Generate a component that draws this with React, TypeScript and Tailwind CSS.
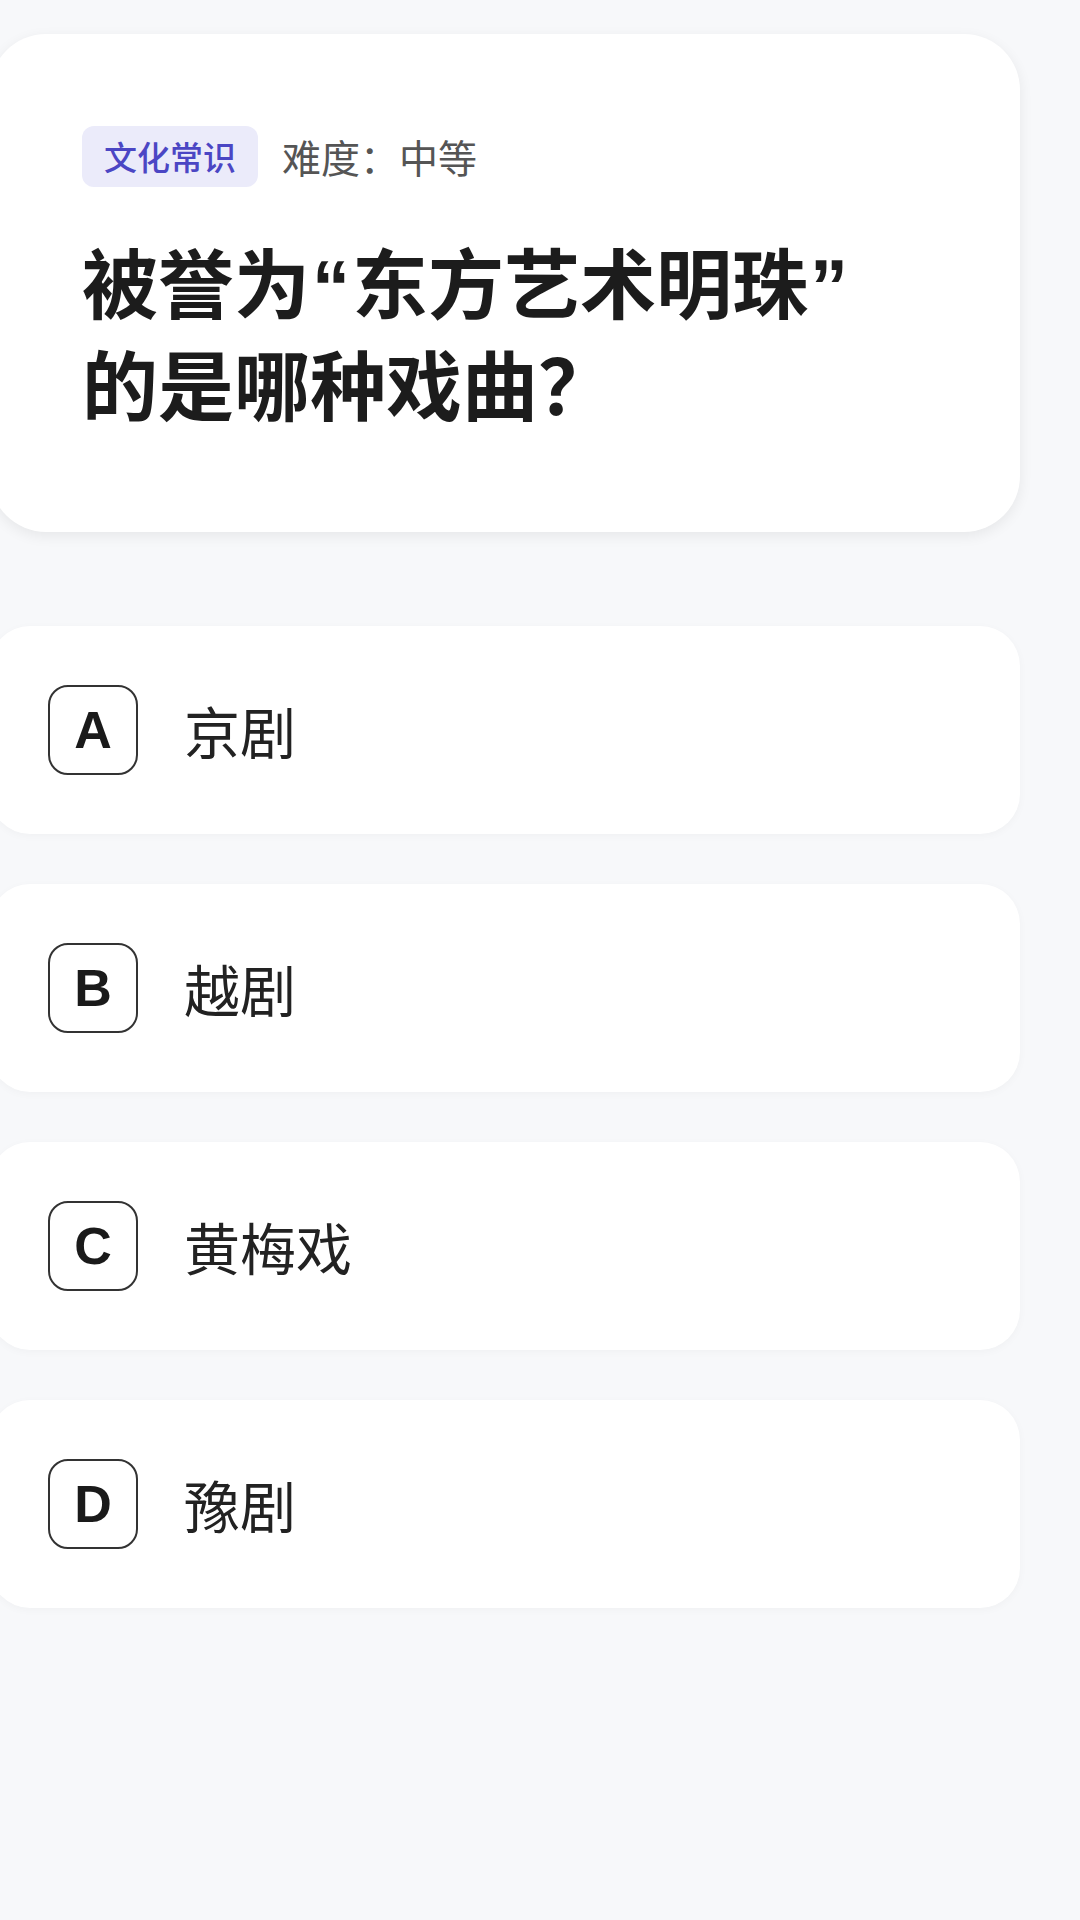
const OPTIONS = [
  { key: 'A', text: '京剧' },
  { key: 'B', text: '越剧' },
  { key: 'C', text: '黄梅戏' },
  { key: 'D', text: '豫剧' },
]

const CJK = "font-['Noto_Sans_CJK_SC','Noto_Sans',sans-serif]"
const LATIN = "font-['Liberation_Sans','Roboto',sans-serif]"

export default function App() {
  return (
    <div className={`min-h-[1920px] w-[1080px] overflow-hidden bg-[#f7f8fa] ${CJK}`}>
      <div className="-ml-[10px] flex flex-col pr-[60px] pt-[34px]">
        {/* Question card */}
        <div className="rounded-[56px] bg-white pb-[99px] pl-[92px] pr-[40px] pt-[92px] shadow-[0_4px_14px_rgba(0,0,0,0.07)]">
          <div className="flex items-center gap-[24px]">
            <span className="flex h-[61px] items-center rounded-[12px] bg-[#ebebfa] px-[22px] text-[33px] font-medium text-[#4b46c4]">
              文化常识
            </span>
            <span className="text-[39px] text-[#555555]">难度：中等</span>
          </div>
          <h1 className="mt-[42px] h-[204px] text-[76px] font-bold leading-[102px] text-[#1c1c1c]">
            被誉为<span className={`${LATIN} mx-[2px] leading-[0]`}>“</span>东方艺术明珠<span className={`${LATIN} mx-[2px] leading-[0]`}>”</span>
            <br />
            的是哪种戏曲？
          </h1>
        </div>

        {/* Options */}
        <div className="mt-[94px] flex flex-col gap-[50px]">
          {OPTIONS.map(o => (
            <div
              key={o.key}
              className="flex h-[208px] items-center gap-[46px] rounded-[40px] bg-white pl-[58px] shadow-[0_2px_8px_rgba(0,0,0,0.03)]"
            >
              <span className={`flex h-[90px] w-[90px] shrink-0 items-center justify-center rounded-[20px] border-2 border-[#333333] ${LATIN} text-[52px] font-bold text-[#1a1a1a]`}>
                {o.key}
              </span>
              <span className="text-[56px] text-[#222222]">{o.text}</span>
            </div>
          ))}
        </div>
      </div>
    </div>
  )
}
